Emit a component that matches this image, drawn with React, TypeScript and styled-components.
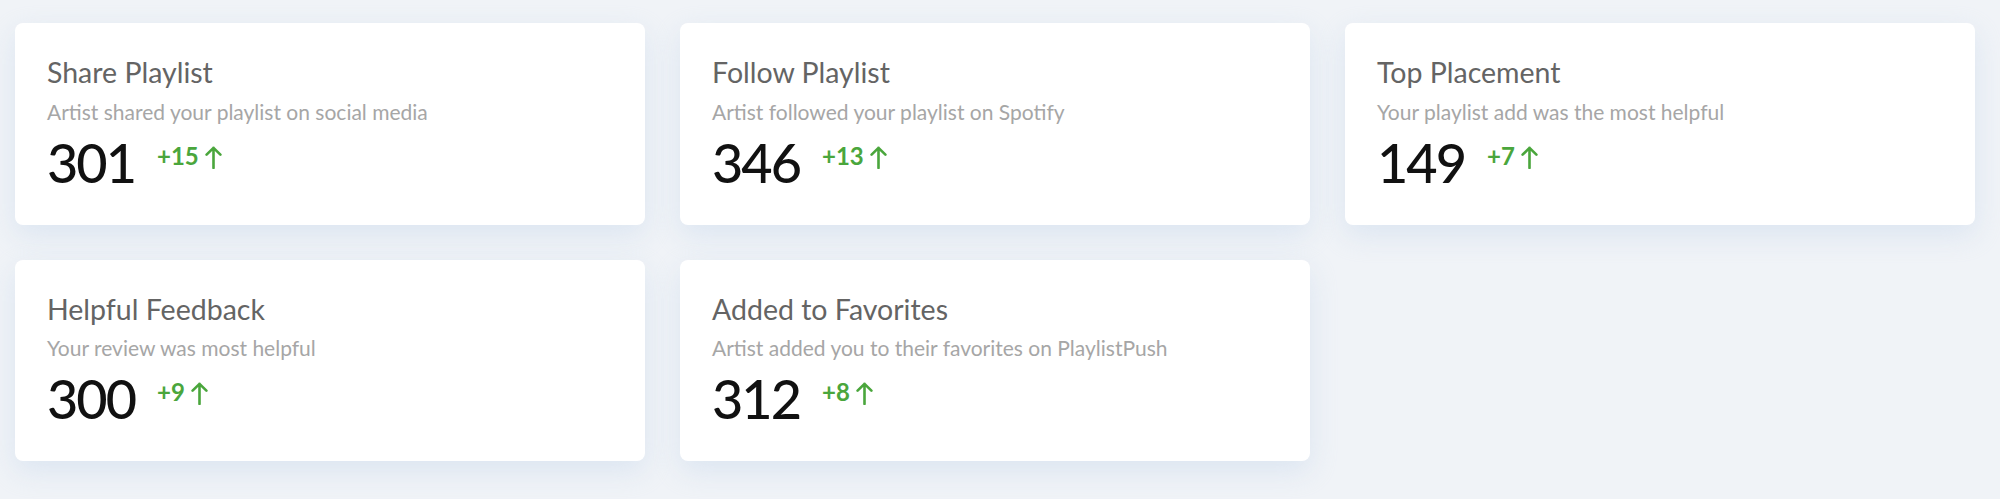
import styled, { createGlobalStyle } from 'styled-components';

const GlobalStyle = createGlobalStyle`
  html, body {
    margin: 0;
    padding: 0;
    background-color: #f0f3f7;
    font-family: 'Lato', 'Noto Sans', sans-serif;
  }
  * {
    box-sizing: border-box;
  }
`;

const Page = styled.div`
  min-height: 100vh;
  background-color: #f0f3f7;
  padding: 23px 25px 0 15px;
`;

const Grid = styled.div`
  display: grid;
  grid-template-columns: repeat(3, 1fr);
  column-gap: 35px;
  row-gap: 35px;
`;

const Card = styled.div`
  background-color: #ffffff;
  border-radius: 8px;
  padding: 33px 32px 35px;
  box-shadow: 0 10px 28px rgba(196, 212, 234, 0.45);
`;

const Title = styled.h3`
  margin: 0;
  font-size: 28.5px;
  line-height: 33.6px;
  font-weight: 400;
  color: #646464;
`;

const Subtitle = styled.p`
  margin: 10px 0 0;
  font-size: 21px;
  line-height: 24px;
  font-weight: 400;
  color: #a6a6a6;
`;

const StatRow = styled.div`
  display: flex;
  align-items: flex-start;
  margin-top: 12px;
`;

const Count = styled.span`
  font-size: 54px;
  line-height: 1;
  font-weight: 500;
  color: #111111;
  letter-spacing: -2px;
`;

const Delta = styled.span`
  display: flex;
  align-items: flex-start;
  gap: 6px;
  margin-left: 22px;
  margin-top: 8px;
  font-size: 24px;
  line-height: 1;
  font-weight: 700;
  color: #4aa63c;

  svg {
    margin-top: 2px;
  }
`;

const ArrowUp = () => (
  <svg width="17" height="23" viewBox="0 0 17 23" fill="none">
    <path
      d="M8.5 22V1.8M1.6 8.7L8.5 1.8l6.9 6.9"
      stroke="#4aa63c"
      strokeWidth="2.6"
      strokeLinecap="round"
      strokeLinejoin="round"
    />
  </svg>
);

type Stat = {
  title: string;
  description: string;
  count: number;
  delta: number;
};

const stats: Stat[] = [
  { title: 'Share Playlist', description: 'Artist shared your playlist on social media', count: 301, delta: 15 },
  { title: 'Follow Playlist', description: 'Artist followed your playlist on Spotify', count: 346, delta: 13 },
  { title: 'Top Placement', description: 'Your playlist add was the most helpful', count: 149, delta: 7 },
  { title: 'Helpful Feedback', description: 'Your review was most helpful', count: 300, delta: 9 },
  { title: 'Added to Favorites', description: 'Artist added you to their favorites on PlaylistPush', count: 312, delta: 8 },
];

const App = () => (
  <>
    <GlobalStyle />
    <Page>
      <Grid>
        {stats.map((s) => (
          <Card key={s.title}>
            <Title>{s.title}</Title>
            <Subtitle>{s.description}</Subtitle>
            <StatRow>
              <Count>{s.count}</Count>
              <Delta>
                +{s.delta}
                <ArrowUp />
              </Delta>
            </StatRow>
          </Card>
        ))}
      </Grid>
    </Page>
  </>
);

export default App;
